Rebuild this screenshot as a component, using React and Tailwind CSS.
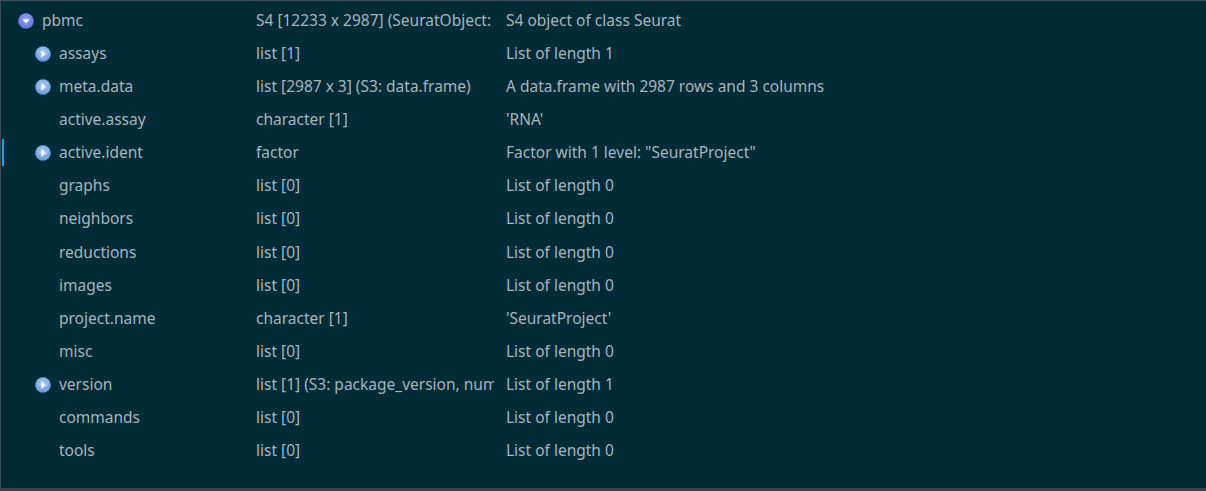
import React from "react";

const rows = [
  { name: "pbmc", type: "S4 [12233 x 2987] (SeuratObject: SeuratObject)", value: "S4 object of class Seurat", level: 0, icon: "down" },
  { name: "assays", type: "list [1]", value: "List of length 1", level: 1, icon: "right" },
  { name: "meta.data", type: "list [2987 x 3] (S3: data.frame)", value: "A data.frame with 2987 rows and 3 columns", level: 1, icon: "right" },
  { name: "active.assay", type: "character [1]", value: "'RNA'", level: 1 },
  { name: "active.ident", type: "factor", value: 'Factor with 1 level: "SeuratProject"', level: 1, icon: "right", active: true },
  { name: "graphs", type: "list [0]", value: "List of length 0", level: 1 },
  { name: "neighbors", type: "list [0]", value: "List of length 0", level: 1 },
  { name: "reductions", type: "list [0]", value: "List of length 0", level: 1 },
  { name: "images", type: "list [0]", value: "List of length 0", level: 1 },
  { name: "project.name", type: "character [1]", value: "'SeuratProject'", level: 1 },
  { name: "misc", type: "list [0]", value: "List of length 0", level: 1 },
  { name: "version", type: "list [1] (S3: package_version, numeric_version)", value: "List of length 1", level: 1, icon: "right" },
  { name: "commands", type: "list [0]", value: "List of length 0", level: 1 },
  { name: "tools", type: "list [0]", value: "List of length 0", level: 1 },
];

function Icon({ dir, top }) {
  return (
    <svg width="16" height="16" viewBox="0 0 16 16" className="shrink-0">
      <defs>
        <radialGradient id={`g-${dir}`} cx="50%" cy="40%" r="60%">
          <stop offset="0%" stopColor={top ? "#9aa6f4" : "#b9d4f2"} />
          <stop offset="100%" stopColor={top ? "#5f6fe0" : "#5f95d8"} />
        </radialGradient>
      </defs>
      <circle cx="8" cy="8" r="7.8" fill={`url(#g-${dir})`} />
      {dir === "down" ? (
        <path d="M4.5 6.3 L11.5 6.3 L8 10.6 Z" fill="#ffffff" />
      ) : (
        <path d="M6.3 4.5 L6.3 11.5 L10.6 8 Z" fill="#ffffff" />
      )}
    </svg>
  );
}

export default function App() {
  return (
    <div
      className="w-[1206px] h-[491px] bg-[#022b38] flex flex-col overflow-hidden"
      style={{ fontFamily: '"Segoe UI", "Noto Sans", "Open Sans", sans-serif' }}
    >
      <div className="flex h-px bg-[#45525c] shrink-0">
        <div className="w-[249px]" />
        <div className="w-px bg-[#2a3640]" />
        <div className="w-[247px]" />
        <div className="w-px bg-[#2a3640]" />
      </div>
      <div className="flex-1 border-l border-[#3d4a54] pt-[3px]">
        {rows.map((r, i) => (
          <div key={i} className="relative flex h-[33.1px] items-center text-[15.5px] text-[#a6b4bc]">
            {r.active && <div className="absolute left-[1px] top-[3px] bottom-[3px] w-[2px] bg-[#1fa0f0]" />}
            <div className={`w-[248px] flex items-center shrink-0 ${r.level === 0 ? "pl-[17px]" : "pl-[34px]"}`}>
              <div className="w-[16px] h-[16px] mr-[8px] flex items-center">
                {r.icon && <Icon dir={r.icon} top={r.level === 0} />}
              </div>
              <span className="whitespace-nowrap">{r.name}</span>
            </div>
            <div className="w-[249px] pl-[7px] pr-[4px] shrink-0">
              <div className="overflow-hidden whitespace-nowrap">{r.type}</div>
            </div>
            <div className="pl-[8px] whitespace-nowrap">{r.value}</div>
          </div>
        ))}
      </div>
      <div className="h-[3px] bg-[#3a444c] shrink-0" />
    </div>
  );
}
